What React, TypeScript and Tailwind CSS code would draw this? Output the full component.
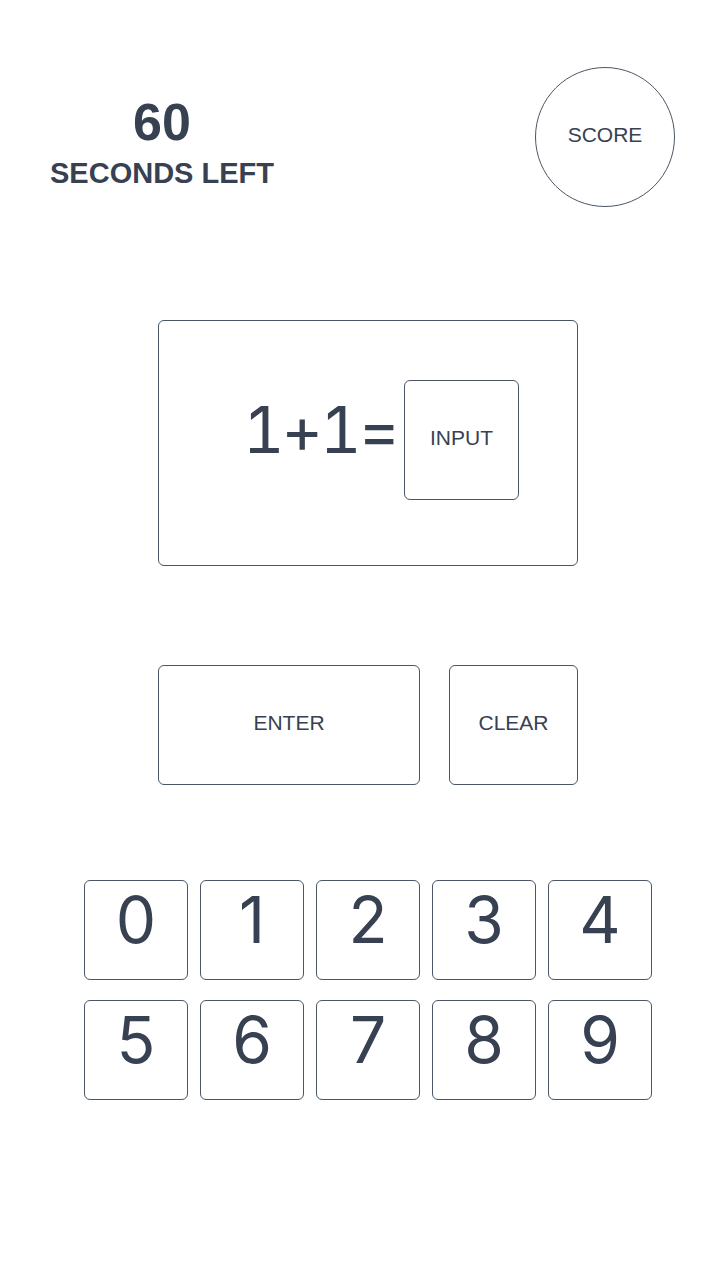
export default function App() {
  const rows = [
    ["0", "1", "2", "3", "4"],
    ["5", "6", "7", "8", "9"],
  ];

  return (
    <div className="w-[720px] h-[1280px] bg-white text-[#374151] font-['Liberation_Sans',Arial,sans-serif]">
      {/* header */}
      <div className="flex justify-between pt-[67px] pr-[45px]">
        <div className="w-[260px] ml-[32px] mt-[29px] flex flex-col items-center">
          <div className="text-[52px] leading-none font-bold">60</div>
          <div className="text-[29px] leading-none font-bold mt-[11px]">SECONDS LEFT</div>
        </div>
        <div className="w-[140px] h-[140px] rounded-full border border-gray-600 flex items-center justify-center">
          <span className="text-[21px] -mt-[4px]">SCORE</span>
        </div>
      </div>

      {/* question */}
      <div className="ml-[158px] mt-[113px] w-[420px] h-[246px] border border-gray-600 rounded-md flex items-start pl-[84px] pt-[59px]">
        <div className="font-['Inter',sans-serif] tabular-nums tracking-[-3px] text-[64px] leading-none mt-[18px]">1+1=</div>
        <div className="ml-[7px] w-[115px] h-[120px] border border-gray-600 rounded-md flex items-center justify-center">
          <span className="text-[21px] -mt-[4px]">INPUT</span>
        </div>
      </div>

      {/* actions */}
      <div className="ml-[158px] mt-[99px] flex gap-[29px]">
        <button className="w-[262px] h-[120px] border border-gray-600 rounded-md flex items-center justify-center text-[21px]">
          <span className="-mt-[4px]">ENTER</span>
        </button>
        <button className="w-[129px] h-[120px] border border-gray-600 rounded-md flex items-center justify-center text-[21px]">
          <span className="-mt-[4px]">CLEAR</span>
        </button>
      </div>

      {/* keypad */}
      <div className="ml-[84px] mt-[95px] flex flex-col gap-[20px]">
        {rows.map((row, i) => (
          <div key={i} className="flex gap-[12px]">
            {row.map((d) => (
              <button
                key={d}
                className="w-[104px] h-[100px] border border-gray-600 rounded-md flex justify-center pt-[7px] font-['Inter',sans-serif] text-[64px] leading-none"
              >
                {d}
              </button>
            ))}
          </div>
        ))}
      </div>
    </div>
  );
}
